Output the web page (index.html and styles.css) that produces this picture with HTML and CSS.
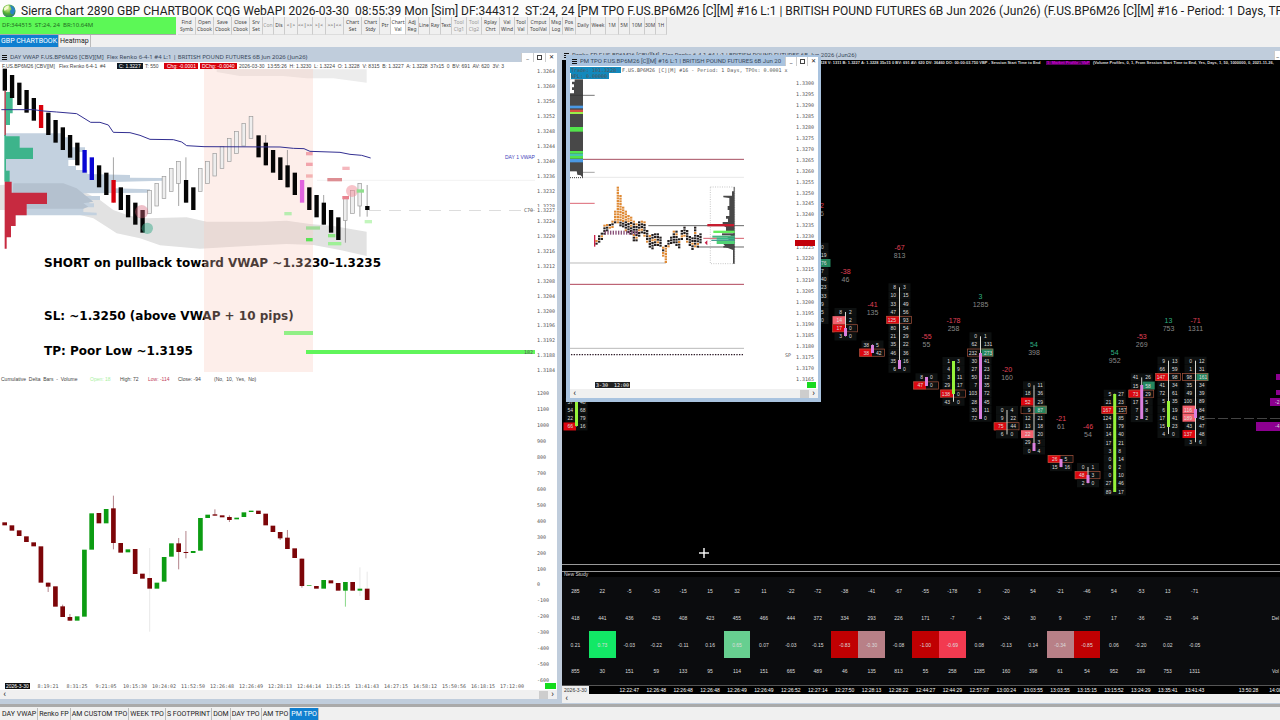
FILE: index.html
```html
<!DOCTYPE html>
<html lang="en">
<head>
<meta charset="utf-8">
<title>Sierra Chart 2890 GBP CHARTBOOK</title>
<link rel="stylesheet" href="styles.css">
</head>
<body>
<header class="titlebar">
  <svg class="logo" viewBox="0 0 16 16" aria-hidden="true">
    <defs><radialGradient id="globe" cx=".4" cy=".3" r=".8"><stop offset="0" stop-color="#e6f59a"/><stop offset=".5" stop-color="#52ad35"/><stop offset="1" stop-color="#1b6a78"/></radialGradient></defs>
    <circle cx="8" cy="8" r="7.5" fill="url(#globe)"/>
    <path d="M9 1q5 1 6 6l-2 5-3-1-1-3 2-2z" fill="#2b82c4"/><path d="M2 5q3-4 6-3l-1 3-4 3z" fill="#f3f9cf"/>
  </svg>
  <h1 class="app-title">Sierra Chart 2890 GBP CHARTBOOK CQG WebAPI 2026-03-30&nbsp; 08:55:39 Mon [Sim] DF:344312&nbsp; ST:24, 24 [PM TPO F.US.BP6M26 [C][M] #16 L:1 | BRITISH POUND FUTURES 6B Jun 2026 (Jun26) (F.US.BP6M26 [C][M] #16 - Period: 1 Days, TPOs</h1>
</header>
<div class="toolbar">
  <div class="status">DF:344515&nbsp; ST:24, 24&nbsp; BR:10.64M</div>
  <button class="l">Find<br>Symb</button><button class="l">Open<br>Cbook</button><button class="l">Save<br>Cbook</button><button class="l">Close<br>Cbook</button><button class="s">Srv<br>Set</button><button class="xs dim">Con</button><button class="xs">Dis</button><button class="s">&lt;|&gt;</button><button class="m">&lt;&lt;|&gt;&gt;</button><button class="s">&gt;|&lt;</button><button class="l">&gt;&gt;|&lt;&lt;</button><button class="l">Chart<br>Set</button><button class="l">Chart<br>Stdy</button><button class="xs">Ptr</button><button class="m on">Chart<br>Val</button><button class="s">Adj<br>Reg</button><button class="xs">Line</button><button class="xs">Ray</button><button class="xs">Text</button><button class="m dim">Tool<br>Clg1</button><button class="m dim">Tool<br>Clg2</button><button class="l">Rplay<br>Chrt</button><button class="m">Val<br>Wind</button><button class="s">Tool<br>Val</button><button class="xl">Cmput<br>ToolVal</button><button class="s">Msg<br>Log</button><button class="s">Pos<br>Win</button><button class="m">Daily</button><button class="m">Week</button><button class="s">1M</button><button class="xs">5M</button><button class="m">10M</button><button class="xs">30M</button><button class="xs">1H</button>
</div>
<nav class="tabs books"><button class="active">GBP CHARTBOOK</button><button>Heatmap</button></nav>
<main class="workspace">
  <section class="win day">
    <div class="win-title"><span class="menu"></span><span class="name">DAY VWAP F.US.BP6M26 [CBV][M]&nbsp; Flex Renko 6-4-1 #4 L:1 | BRITISH POUND FUTURES 6B Jun 2026 (Jun26)</span><span class="controls"><button aria-label="Minimize">_</button><button aria-label="Maximize"><i></i></button><button aria-label="Close">✕</button></span></div>
    <svg id="day" class="chart" viewBox="0 62 557 628"></svg>
    <div class="scroll"><button aria-label="Left">‹</button><i></i><button aria-label="Right">›</button></div>
  </section>
  <section class="win renko">
    <div class="win-title"><span class="menu"></span><span class="name">Renko FP F.US.BP6M26 [CBV][M]&nbsp; Flex Renko 6-4-1 #4 L:1 | BRITISH POUND FUTURES 6B Jun 2026 (Jun26)</span><span class="controls"><button aria-label="Minimize">_</button></span></div>
    <svg id="renko" class="chart" viewBox="562 60 718 517"></svg>
    <div class="study"><table id="study"></table></div>
    <div class="scroll"><button aria-label="Left">‹</button></div>
  </section>
  <section class="win pm">
    <div class="win-title"><span class="menu"></span><span class="name">PM TPO F.US.BP6M26 [C][M] #16 L:1 | BRITISH POUND FUTURES 6B Jun 20</span><span class="controls"><button aria-label="Minimize">_</button><button aria-label="Maximize"><i></i></button><button aria-label="Close">✕</button></span></div>
    <svg id="pm" class="chart" viewBox="570 66 248 323"></svg>
    <div class="scroll"><button aria-label="Left">‹</button><i></i><button aria-label="Right">›</button></div>
  </section>
</main>
<nav class="tabs charts"><button>DAY VWAP</button><button>Renko FP</button><button>AM CUSTOM TPO</button><button>WEEK TPO</button><button>S FOOTPRINT</button><button>DOM</button><button>DAY TPO</button><button>AM TPO</button><button class="active">PM TPO</button></nav>
<script src="charts.js"></script>
</body>
</html>
```
FILE: styles.css
```css
* { box-sizing: border-box; }
body { margin: 0; min-height: 100vh; display: flex; flex-direction: column; background: #f0f0f0; font-family: Roboto, "Noto Sans", sans-serif; color: #222; overflow: hidden; }
button { font: inherit; color: inherit; border: 0; background: none; padding: 0; margin: 0; }
.titlebar { height: 17px; display: flex; align-items: center; gap: 5px; padding: 5px 0 0 2px; background: #fcfcfc; }
.logo { width: 14px; height: 14px; flex: none; }
.app-title { margin: 0; font-size: 12px; font-weight: 400; line-height: 14px; white-space: nowrap; }
.toolbar { height: 18px; display: flex; font-family: "Noto Sans", sans-serif; font-size: 5px; line-height: 7px; color: #444; }
.status { width: 176px; margin-right: 2px; background: #5cf856; color: #226b22; font-size: 6px; line-height: 17px; padding-left: 2px; border-bottom: 1px solid #aaa; }
.toolbar button { flex: none; border-right: 1px solid #ccc; border-bottom: 1px solid #ddd; white-space: nowrap; overflow: hidden; text-align: center; }
.toolbar .xs { width: 11px; }
.toolbar .s { width: 13px; }
.toolbar .m { width: 15px; }
.toolbar .l { width: 18px; }
.toolbar .xl { width: 22px; }
.toolbar .dim { color: #999; }
.toolbar .on { background: #fff; }
.tabs { height: 12px; display: flex; font-size: 7px; line-height: 11px; }
.tabs button { padding: 0 1px; border-right: 1px solid #bbb; white-space: nowrap; }
.tabs .active { background: #0f7fd0; color: #fff; }
.workspace { flex: 1; position: relative; display: grid; grid-template-columns: 557fr 718fr; column-gap: 5px; align-items: start; background: #c0cddc; border-bottom: 3px solid #aaa; }
.win { min-width: 0; }
.day { padding-top: 5px; }
.renko { padding-top: 3px; }
.win-title { height: 10px; display: flex; align-items: center; gap: 3px; padding-left: 2px; color: #37475a; font-size: 6px; line-height: 10px; white-space: nowrap; overflow: hidden; }
.day .win-title { font-family: "Noto Sans", sans-serif; }
.menu { width: 5px; height: 5px; flex: none; background: repeating-linear-gradient(#111 0 1px, transparent 1px 2px); }
.name { flex: 1; min-width: 0; overflow: hidden; }
.controls { display: flex; }
.controls button { width: 12px; height: 9px; background: #fff; color: #222; line-height: 8px; display: grid; place-items: center; border-left: 1px solid #ccc; }
.controls i { width: 5px; height: 5px; border: 1px solid #444; }
.renko .controls button { width: 6px; }
.chart { display: block; width: 100%; height: auto; background: #fff; }
#renko { background: #000; }
.scroll { height: 9px; display: flex; align-items: center; background: #f0f0f0; font-size: 9px; line-height: 8px; }
.scroll button { width: 9px; height: 9px; line-height: 7px; }
.scroll i { width: 9px; height: 8px; background: #cdcdcd; margin-left: auto; }
.study { overflow: hidden; background: #0b0c0e; }
#study { width: 101.25%; table-layout: fixed; border-collapse: collapse; color: #ddd; font: 5px "Liberation Sans", sans-serif; text-align: center; }
#study td { height: 27px; padding: 0; white-space: nowrap; }
#study tfoot td { height: 9px; background: #000; color: #fff; border-top: 1px solid #555; }
#study tfoot td:first-child { background: #eee; color: #333; }
.g1 { background: #12e866; }
.g2 { background: #67cf90; }
.r1 { background: #c00002; }
.r2 { background: #b88087; }
.r3 { background: #f23a50; }
.pm { position: absolute; left: 566px; top: 8px; width: 255px; border: 4px solid #a9c3df; border-top-width: 1px; border-right-width: 3px; }
.pm .win-title { background: #a9c3df; }
.pm .controls button { width: 11px; }
.charts { background: #f0f0f0; height: 13px; padding: 1px 0 0 1px; }
text { white-space: pre; }
.mono { font: 5px "DejaVu Sans Mono", monospace; fill: #555; }
.line { font: 5px "Liberation Sans", sans-serif; fill: #444; }
.note { font: bold 12px "DejaVu Sans", sans-serif; fill: #000; }
.tiny { font: 5px "Liberation Sans", sans-serif; fill: #ddd; }
.sum { font: 7px "Liberation Sans", sans-serif; fill: #888; text-anchor: middle; }
.head { font: bold 4px "Liberation Sans", sans-serif; fill: #ddd; }
.end { text-anchor: end; }
.mid { text-anchor: middle; }
```
FILE: charts.js
```js
const rect = (x, y, w, h, fill, extra = '') => `<rect x="${x}" y="${y}" width="${w}" height="${h}" fill="${fill}" ${extra}/>`;
const line = (x1, y1, x2, y2, stroke, extra = '') => `<line x1="${x1}" y1="${y1}" x2="${x2}" y2="${y2}" stroke="${stroke}" ${extra}/>`;
const text = (x, y, s, cls = 'mono', extra = '') => `<text x="${x}" y="${y}" class="${cls}" ${extra}>${s}</text>`;
const poly = (pts, fill) => `<polygon points="${pts}" fill="${fill}"/>`;
const put = (id, s) => { document.getElementById(id).innerHTML = s; };

/* Day VWAP window: price bars, drawn on a 3x grid with origin (0, 60) */
const bars = `26-92 45-114 68-135 90-158 114-182 135-204r 158-225 180-248 202-270 225-293 248-316 270-338b 292-360b 316-382 338-405 360-428r/292-428 382-450 405-472 428-494 450-518 392-460h 370-438h 349-416h 326-394h 304-370h/304-438 360-428/292-428 382-450 326-394h 304-370h 280-348h 259-326h 236-304h 214-280h 191-258h 170-236h 226-292 248-316/225-316 270-338 292-360 316-382/270-382 338-405 360-428v 382-450 405-472 428-494/405-494 450-518 472-540 416-482h/416-548 392-460h 370-438h/370-470 438-450/375-470`.split(' ');
const fills = { r: '#d8000c', b: '#0a06d4', v: '#e165df', h: '#eee' };
let d = '<g transform="translate(0 60) scale(.33333)">';
d += poly('650,28 1100,28 1100,68 1000,55 920,55 850,48 720,48 650,36', '#ececec');
d += poly('0,375 100,370 190,370 230,385 300,420 340,450 390,468 440,475 560,472 620,485 780,485 860,482 930,492 1000,498 1100,515 1100,588 1020,570 940,555 860,552 780,556 700,560 600,566 480,556 420,535 350,520 320,500 280,475 180,450 0,450', '#e2e2e2');
d += poly('16,220 195,220 195,232 212,232 212,262 255,262 255,276 235,276 235,300 205,300 205,318 228,318 228,330 262,330 262,342 390,345 390,353 490,354 490,362 340,366 340,385 450,388 450,398 250,400 250,408 300,408 300,420 268,420 268,430 282,430 282,442 250,442 250,456 290,458 290,466 16,466', '#c3d1df');
d += poly('40,370 190,370 230,385 280,425 250,430 265,440 250,446 35,446', '#b4c1cf');
d += poly('16,96 38,96 38,160 30,160 30,195 16,195', '#45b990') + poly('16,229 59,229 59,263 99,263 99,297 16,297', '#3db48b') + rect(16, 332, 13, 34, '#3db48b');
d += rect(13, 92, 5, 136, '#b4505a') + rect(13, 225, 5, 140, '#3db48b');
d += poly('14,365 35,365 35,398 141,398 141,432 80,432 80,466 47,466 47,498 33,498 33,532 20,532 20,566 14,566', '#c72a40');
d += '</g>';
d += line(317, 180.3, 535, 180.3, '#f2f2f2') + line(369, 210.5, 535, 210.5, '#ddd', 'stroke-dasharray="12 8"');
d += text(44, 267, 'SHORT on pullback toward VWAP ~1.3230–1.3235', 'note') + text(44, 320, 'SL: ~1.3250 (above VWAP + 10 pips)', 'note') + text(44, 355, 'TP: Poor Low ~1.3195', 'note');
d += rect(204, 69, 109, 303, '#f8c8b8', 'opacity=".3"');
d += '<g transform="translate(0 60) scale(.33333)">';
bars.forEach((b, i) => {
  const [body, wick] = b.split('/');
  const [t, e] = body.split('-').map(v => parseInt(v, 10));
  const x = 14 + 21.75 * i;
  const kind = body.slice(-1);
  if (wick) { const [a, z] = wick.split('-'); d += line(x, a, x, z, '#777', 'stroke-width="2"'); }
  const hollow = kind === 'h';
  d += rect(x - 6, t, hollow ? 11 : 13, e - t, fills[kind] || '#050505', hollow ? 'stroke="#999" stroke-width="2"' : '');
});
d += '<polyline fill="none" stroke="#312e91" stroke-width="3" points="4,149 100,149 130,153 170,156 230,161 272,187 300,187 325,195 340,217 390,218 420,226 450,238 520,239 545,246 560,257 612,260 840,261 880,265 912,266 930,274 1020,277 1050,283 1085,286 1112,294"/>';
d += '<circle cx="425" cy="455" r="20" fill="#d46277" opacity=".4"/><circle cx="442" cy="505" r="17" fill="#39a98a" opacity=".5"/><circle cx="1056" cy="393" r="18" fill="#f28a96" opacity=".5"/>';
[[918, 276, 20, '#f2a4ac'], [918, 308, 20, '#f2a4ac'], [918, 343, 20, '#f4b3b3'], [982, 354, 44, '#dd8e93'], [1027, 320, 22, '#f5b7bd'], [1027, 408, 20, '#e9828e'], [853, 456, 22, '#b7edb0'], [918, 499, 42, '#a2dc9a'], [918, 534, 20, '#5ce355'], [984, 522, 22, '#8ee785'], [984, 546, 40, '#9ef096'], [1070, 388, 22, '#90df8d'], [1094, 480, 22, '#c3f6bd']].forEach(([x, y, w, c]) => { d += rect(x, y, w, 10, c); });
d += '</g>';
d += rect(284, 331, 29, 4, '#91ef85') + rect(306, 350, 229, 4, '#60f55b');
const white = 'style="fill:#fff"';
d += text(2, 68, 'F.US.BP6M26 [CBV][M]   Flex Renko 6-4-1  #4', 'line') + rect(117, 63, 26, 6, '#101820') + text(119, 68, 'C: 1.3227', 'line', white) + text(145, 68, 'T: 550', 'line') + rect(164, 63, 34, 6, '#d8000c') + text(167, 68, 'Chg: -0.0001', 'line', white) + rect(200, 63, 37, 6, '#d8000c') + text(202, 68, 'DChg: -0.0040', 'line', white);
d += text(239, 68, '2026-03-30  13:55:26  H: 1.3230  L: 1.3224  O: 1.3228  V: 8315  B: 1.3227  A: 1.3228  37x15  0  BV: 691  AV: 620  3V: 3', 'line');
for (let i = 0; i < 21; i++) d += text(537, (73.3 + i * 14.95).toFixed(1), (1.3264 - i * 0.0004).toFixed(4));
d += rect(536, 207, 20, 6, '#fff') + text(537, 212, '1.3227') + text(524, 212, 'C70') + text(524, 354, '182') + text(505, 159, 'DAY 1 VWAP', 'line', 'style="fill:#4340b8"');
d += text(1, 381, 'Cumulative  Delta  Bars  -  Volume', 'line') + text(90, 381, 'Open: 18', 'line', 'style="fill:#a8f0a0"') + text(120, 381, 'High: 72', 'line') + text(148, 381, 'Low: -114', 'line', 'style="fill:#c0405a"') + text(178, 381, 'Close: -94', 'line') + text(214, 381, '(No,  10,  Yes,  No)', 'line');
for (let i = 0; i < 19; i++) d += text(537, (395 + i * 15.95).toFixed(1), 1200 - i * 100);

/* cumulative delta bars, origin (0, 480) */
const delta = `r127-136 r136-152 r151-168 r169-186 r187-199 r199-308 r308-320/308-336 r319-380 r379-411/374-411 r411-422/402-422 g409-422 g209-410 g100-209 r99-130 g87-130 r85-189/47-208 r189-218 g208-217 r207-282 r281-296 r294-326/204-455 g308-326 g231-305 g190-230 r190-216/174-268 r216-219/153-235 g213-219 g114-212 g104-114 r103-107/88-107 r106-112 r111-120/106-126 g113-118 g97-111 g92-96 r92-102 r101-136 r137-156 r156-175/156-180 r173-207/150-207 r205-234 r236-318/236-323 g316-318 r318-326 g300-326 r301-310 r309-332 g306-332/306-380 r306-332 g326-332/262-348 r326-360/275-360`.split(' ');
d += '<g transform="translate(0 480) scale(.33333)">';
delta.forEach((b, i) => {
  const [body, wick] = b.split('/');
  const [t, e] = body.slice(1).split('-').map(Number);
  const x = 14 + 21.75 * i;
  const red = body[0] === 'r';
  const faint = i === 20 || i > 48;
  if (wick) { const [a, z] = wick.split('-'); d += line(x, a, x, z, faint ? '#ddd' : red ? '#8d4550' : '#4cc34c', 'stroke-width="2"'); }
  d += rect(x - 7, t, 14, e - t, red ? '#7c0508' : '#0c9c12');
});
d += '</g>' + rect(5, 683, 25, 6, '#111') + text(6, 688, '2026-3-30', 'line', white);
['8:19:21', '8:31:25', '9:21:05', '10:15:30', '10:24:02', '11:52:50', '12:26:48', '12:26:49', '12:28:13', '12:44:14', '13:15:15', '13:41:43', '14:27:15', '14:58:12', '15:50:56', '16:18:15', '17:12:00'].forEach((s, i) => { d += text(48 + i * 29, 688, s, 'mono mid'); });
d += rect(545, 683, 11, 6, '#13dc1c');
put('day', d);

/* Renko footprint window */
const foot = [
  [817.5, 207, '', '', 246.7, '/0 /19 /76g /7 /40 /23 /33 /9 /5 /0', 'w', 0, 0],
  [576.5, 300, '', '', 402, '57/48 54/68 22/79 66/16r', 'l', 380, 426],
  [845.5, 274, -38, 46, 312, '8/2 14/2p 17/0ro 3/0', 'p', 328, 336],
  [872.5, 307, -41, 135, 344.5, '38/5 38/42ro', 'p', 345, 353],
  [899.5, 250, -67, 813, 287.3, '8/3 10/15 33/49 47/56 125/93ro 80/54 21/29 35/22 46/36 35/16 6/0', 'p', 360, 369],
  [926.5, 339, -55, 55, 377.3, '8/0 47/0ro', 'p', 377, 386],
  [953.5, 323, -178, 258, 361, '1/3 4/9 3/11 29/17 138/0ro 43/0', 'l', 361, 394],
  [980.5, 299, 3, 1285, 336.3, '0/1 62/131 232/273go 30/41 27/23 50/12 7/35 103/72 28/45 30/11 72/0', 'p', 353, 419],
  [1007, 372, -20, 160, 410, '0/4 9/22 75/44ro 6/0', 'w', 0, 0],
  [1034, 347, 54, 398, 385.3, '0/11 18/36 52/29r 9/87go 12/21 13/18 22/20p 29/3 0/4', 'p', 443, 451],
  [1061, 421, -21, 61, 459, '26/5ro 15/16', 'p', 459, 467],
  [1088, 429, -46, 54, 467, '0/1 48/3ro 2/0', 'p', 475, 483],
  [1114.7, 355, 54, 952, 393.7, '5/27 21/23 167/157ro 124/85 12/79 14/40 17/21 3/8 0/14 0/2 0/10 27/46 89/17', 'l', 394, 492],
  [1141.7, 339, -53, 269, 377.4, '41/26 15/58g 73/29ro 17/5 7/8 2/2', 'p', 385, 419],
  [1168.5, 323, 13, 753, 360.7, '9/13 66/59 147/98ro 41/34 72/61 5/35 6/19 17/41 15/23 4/0', 'l', 401, 427],
  [1195.5, 323, -71, 1311, 360.7, '0/12 1/31 98/161go 35/34 49/39 100/89 116/84p 189/45p 43/47 137/48r 3/6', 'p', 409, 418]
];
let r = '';
foot.forEach(([x, hy, diff, total, y0, rows, kind, a, z]) => {
  if (total) r += text(x, hy, diff, 'sum', `style="fill:${diff > 0 ? '#2fae80' : '#e04058'}"`) + text(x, hy + 8, total, 'sum');
  const list = rows.split(' ');
  list.forEach((row, i) => {
    const [, lo, hi, flags] = row.match(/(\d*)\/(\d+)(\w*)/);
    const y = y0 + i * 8.15;
    r += rect(x - 11, y - 4, 22, 8, '#0d1010');
    if (/[rp]/.test(flags)) r += rect(x - 13, y - 4, 12.5, 8, flags.includes('r') ? '#dc0710' : '#f4626f');
    if (flags.includes('g')) r += rect(x + 1, y - 4, 12, 8, '#24865f');
    if (flags.includes('o')) r += rect(x - 13, y - 3.6, 25, 7.2, 'none', 'stroke="#a8553e" stroke-width=".7"');
    if (lo) r += text(x - 3.5, y + 2, lo, 'tiny end');
    r += text(x + 3.5, y + 2, hi, 'tiny');
  });
  r += line(x, y0, x, y0 + (list.length - 1) * 8.15, '#d8d8d0');
  if (z) r += rect(x - 1.5, a, 3, z - a, kind === 'l' ? '#96f23a' : '#db80df');
});
r += text(822, 208, '2', 'sum', 'style="fill:#e04058"') + text(822, 216, '6', 'sum');
r += line(1205, 418.5, 1280, 418.5, '#444', 'stroke-dasharray="10 3"');
r += rect(1256, 422, 24, 9, '#8c0090') + rect(1270, 398, 10, 8, '#8c0090') + rect(1276, 390, 4, 5, '#8c0090') + rect(1276, 374, 4, 6, '#8c0090') + text(1275, 428, '-4', 'tiny') + text(1275, 404, '-2', 'tiny');
r += text(820, 64, '228 V: 1311 B: 1.3227 A: 1.3228 35x15 0 BV: 691 AV: 620 DV: 36460 DO: 00:00:03.750 VBP - Session Start Time to End', 'head');
r += rect(1046, 61, 44, 4, '#5b0060') + text(1047, 64, '1: Market Profile - VbP', 'head', 'style="fill:#d000d8"');
r += text(1093, 64, '(Volume Profiles, 0, 1, From Session Start Time to End, Yes, Days, 1, 50, 1000000, 0, 2021-11-26,', 'head');
r += line(562, 564.5, 1280, 564.5, '#999') + line(562, 571.5, 1280, 571.5, '#999') + text(564, 576, 'New Study', 'tiny');
r += line(699, 553, 709, 553, '#fff', 'stroke-width="1.4"') + line(704, 548, 704, 558, '#fff', 'stroke-width="1.4"');
put('renko', r);

const study = [
  '285 22 -5 -53 -15 15 32 11 -22 -72 -38 -41 -67 -55 -178 3 -20 54 -21 -46 54 -53 13 -71',
  '418 441 436 423 408 423 455 466 444 372 334 293 226 171 -7 -4 -24 30 9 -37 17 -36 -23 -94 . . Del',
  '0.21 0.73 -0.03 -0.22 -0.11 0.16 0.65 0.07 -0.03 -0.15 -0.83 -0.30 -0.08 -1.00 -0.69 0.08 -0.13 0.14 -0.34 -0.85 0.06 -0.20 0.02 -0.05',
  '855 30 151 59 133 95 114 151 665 489 46 135 813 55 258 1285 160 398 61 54 952 269 753 1311 . . Vol'
];
const heat = { 1: 'g1', 6: 'g2', 10: 'r1', 11: 'r2', 13: 'r1', 14: 'r3', 18: 'r2', 19: 'r1' };
const times = '2026-3-30 . 12:22:47 12:26:48 12:26:48 12:26:48 12:26:49 12:26:49 12:26:52 12:27:14 12:27:50 12:28:13 12:28:22 12:44:27 12:44:29 12:57:07 13:00:24 13:03:55 13:03:55 13:15:15 13:15:52 13:24:29 13:35:41 13:41:43 . 13:50:28 14:08';
const cells = (s, row) => { const v = s.split(' '); let o = ''; for (let i = 0; i < 27; i++) o += `<td class="${row === 2 && heat[i] || ''}">${v[i] && v[i] !== '.' ? v[i] : ''}</td>`; return `<tr>${o}</tr>`; };
put('study', `<tbody>${study.map(cells).join('')}</tbody><tfoot>${cells(times)}</tfoot>`);

/* PM TPO window, 3x grid with origin (560, 50) */
let p = '<g transform="translate(560 50) scale(.33333)">';
p += rect(30, 88, 39, 276, '#484848') + poly('30,88 44,88 44,95 36,95 36,103 42,103 42,112 36,112 36,120 42,120 42,130 30,130', '#fff') + poly('50,362 69,362 69,383 62,376 52,374', '#484848');
[[167, 8, '#4a98e4'], [179, 7, '#d34e43'], [186, 6, '#9aed49'], [231, 14, '#53e44c'], [303, 8, '#53e44c'], [311, 7, '#46c5b0'], [318, 8, '#53e44c'], [327, 10, '#4a98e4']].forEach(([y, h, c]) => { p += rect(30, y, 39, h, c); });
p += line(30, 136, 104, 136, '#333', 'stroke-width="2"') + line(69, 328, 552, 328, '#a64e60', 'stroke-width="3"') + line(69, 367, 104, 367, '#777', 'stroke-width="2"') + line(30, 383, 69, 383, '#333', 'stroke-width="3" stroke-dasharray="3 3"') + line(69, 382, 552, 382, '#ddd', 'stroke-width="2"') + line(30, 460, 104, 460, '#dc6674', 'stroke-width="3"');
p += line(265, 527, 552, 527, '#666', 'stroke-width="3"') + line(430, 565, 552, 565, '#d55b68', 'stroke-width="3"') + line(415, 591, 552, 591, '#666', 'stroke-width="3"') + line(30, 639, 318, 639, '#bbb', 'stroke-width="3"') + line(30, 703, 552, 703, '#b04458', 'stroke-width="3"') + line(30, 895, 552, 895, '#b9b9b9', 'stroke-width="3"') + line(33, 914, 552, 914, '#2a1724', 'stroke-width="4" stroke-dasharray="4 4"');
const tpo = '570-585 556-576 548-570 524-550 522-542 522-536 512-530 482-520 410-515 435-530 470-530 482-540 495-545 500-550 512-570 520-570 514-560 512-545 514-560 540-580 555-590 552-600 550-590 550-590 560-590 590-620 585-640 570-590 560-580 542-575 542-590 565-595 540-570 530-560 540-580 558-590 562-600 530-590 555-590 550-580'.split(' ');
tpo.forEach((s, i) => {
  const [t, b] = s.split('-').map(Number);
  for (let y = t; y < b; y += 8) {
    const orange = y < 514 || y > 600 || (i * 7 + y) % 5 === 0;
    p += rect(106 + i * 8, y, 7, 6, orange ? '#df8a35' : '#252020');
  }
});
for (let x = 134; x < 238; x += 8) p += rect(x, 542, 4, 12, '#885078');
p += rect(102, 555, 4, 35, '#c91e46') + poly('434,578 442,571 442,586', '#c91e46');
p += '<rect x="451" y="411" width="73" height="230" fill="none" stroke="#aaa" stroke-width="2" stroke-dasharray="3 4"/>';
p += poly('521,411 524,411 524,641 519,641 519,600 498,592 490,582 522,580 500,565 522,550 498,545 498,532 488,526 488,516 504,516 504,506 498,506 498,498 508,498 508,480 503,480 503,468 508,468 508,444 490,442 490,437 516,437 516,424 521,424', '#484848');
p += rect(442, 522, 80, 7, '#c71c30') + rect(460, 542, 64, 7, '#65ed5d') + rect(486, 550, 38, 6, '#4a4a4a') + rect(457, 557, 67, 6, '#48b480') + rect(470, 563, 54, 6, '#35b985') + rect(454, 569, 70, 4, '#499d91') + rect(470, 573, 54, 9, '#50d275') + rect(490, 588, 34, 5, '#484848');
p += '</g>';
p += rect(570, 67, 51, 6, '#1289bd') + rect(571, 73, 38, 6, '#1289bd') + text(571, 72, 'Trade: 101.3228') + text(571, 78, 'NPL: 0.00000') + text(622, 72, 'F.US.BP6M26 [C][M] #16 - Period: 1 Days, TPOs: 0.0001 x');
for (let i = 0; i < 28; i++) p += text(796, (85 + i * 10.95).toFixed(1), (1.33 - i * 0.0005).toFixed(4));
p += rect(795, 240, 20, 6, '#c20009') + text(785, 357, 'SP') + rect(595, 382, 35, 6, '#222') + text(596, 387, '3-30  12:00', 'mono', white) + rect(807, 382, 9, 6, '#18da20');
put('pm', p);
```
